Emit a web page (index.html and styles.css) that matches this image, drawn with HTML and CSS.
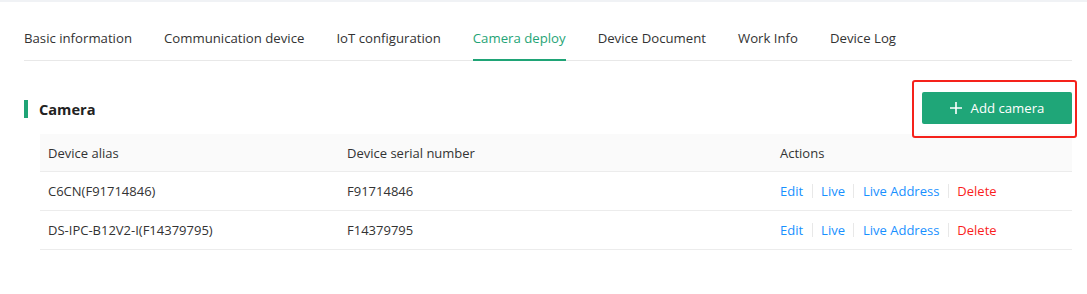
FILE: index.html
```html
<!DOCTYPE html>
<html>
<head>
  <meta charset="UTF-8">
  <title>Camera deploy</title>
  <link rel="stylesheet" href="styles.css">
</head>
<body>
  <div class="page">
    <div class="tabs">
      <span class="tab">Basic information</span>
      <span class="tab">Communication device</span>
      <span class="tab">IoT configuration</span>
      <span class="tab active">Camera deploy</span>
      <span class="tab">Device Document</span>
      <span class="tab">Work Info</span>
      <span class="tab">Device Log</span>
    </div>

    <div class="section-head">
      <span class="title">Camera</span>
      <button class="add-btn">
        <svg width="12" height="12" viewBox="0 0 12 12"><path d="M6 0v12M0 6h12" stroke="#fff" stroke-width="1.6"/></svg>
        Add camera
      </button>
    </div>

    <table class="cams">
      <thead>
        <tr>
          <th class="c1">Device alias</th>
          <th class="c2">Device serial number</th>
          <th>Actions</th>
        </tr>
      </thead>
      <tbody>
        <tr>
          <td>C6CN(F91714846)</td>
          <td>F91714846</td>
          <td class="actions">
            <a>Edit</a><i class="sep"></i><a>Live</a><i class="sep"></i><a>Live Address</a><i class="sep"></i><a class="del">Delete</a>
          </td>
        </tr>
        <tr>
          <td>DS-IPC-B12V2-I(F14379795)</td>
          <td>F14379795</td>
          <td class="actions">
            <a>Edit</a><i class="sep"></i><a>Live</a><i class="sep"></i><a>Live Address</a><i class="sep"></i><a class="del">Delete</a>
          </td>
        </tr>
      </tbody>
    </table>
  </div>
</body>
</html>
```

FILE: styles.css
```css
body {
  margin: 0;
  font-family: "Open Sans", "Noto Sans", sans-serif;
  font-size: 13px;
  color: #333;
  background: #fff;
  border-top: 2px solid #f0f2f5;
}
.page {
  padding: 0 15px 0 24px;
}
.tabs {
  display: flex;
  gap: 32px;
  height: 58px;
  border-bottom: 1px solid #e8e8e8;
  font-size: 13.2px;
}
.tab {
  position: relative;
  padding-top: 26px;
  line-height: 20px;
}
.tab.active {
  color: #1fa476;
}
.tab.active::after {
  content: "";
  position: absolute;
  left: 0;
  right: 0;
  bottom: -1px;
  height: 2px;
  background: #1fa476;
}
.section-head {
  display: flex;
  justify-content: space-between;
  align-items: center;
  margin-top: 31px;
  height: 32px;
}
.title {
  border-left: 4px solid #1fa476;
  padding-left: 11px;
  line-height: 18px;
  margin-top: 2px;
  font-size: 14.6px;
  font-weight: bold;
  color: #222;
}
.add-btn {
  position: relative;
  width: 150px;
  height: 32px;
  display: flex;
  align-items: center;
  justify-content: center;
  gap: 9px;
  background: #1fa678;
  color: #fff;
  border: none;
  border-radius: 2px;
  font-family: inherit;
  font-size: 13.2px;
}
.add-btn::after {
  content: "";
  position: absolute;
  left: -10px;
  right: -5px;
  top: -12px;
  bottom: -14px;
  border: 2px solid #f5221b;
  border-radius: 3px;
}
.cams {
  margin: 10px 0 0 16px;
  width: calc(100% - 16px);
  border-collapse: collapse;
}
.cams th,
.cams td {
  text-align: left;
  font-weight: normal;
  padding: 0 8px;
  border-bottom: 1px solid #ececec;
}
.cams th {
  height: 37px;
  background: #fafafa;
}
.cams td {
  height: 38px;
}
.c1 { width: 283px; }
.c2 { width: 417px; }
.actions a {
  color: #1890ff;
}
.actions a.del {
  color: #fa1e1e;
}
.sep {
  display: inline-block;
  width: 1px;
  height: 14px;
  background: #e8e8e8;
  margin: 0 8.5px;
  vertical-align: -2px;
}
```
